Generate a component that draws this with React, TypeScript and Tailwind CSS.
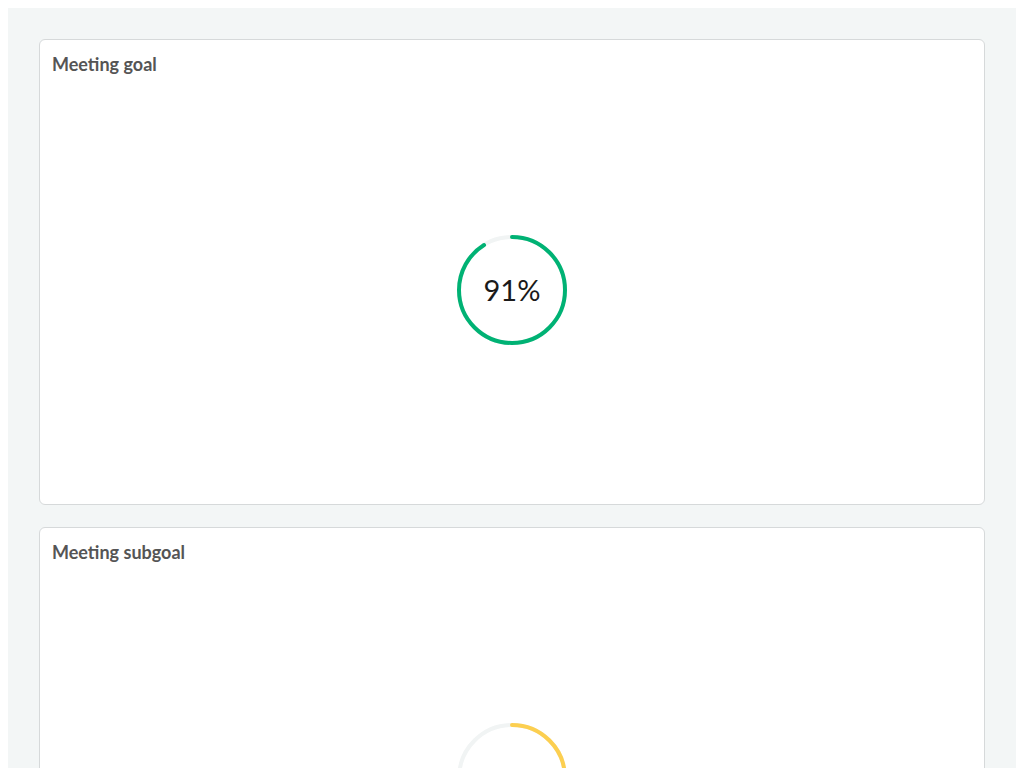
import React from 'react';

type Goal = { title: string; value: number; color: string };

const goals: Goal[] = [
  { title: 'Meeting goal', value: 91, color: '#00b274' },
  { title: 'Meeting subgoal', value: 45, color: '#fccf50' },
];

const Ring: React.FC<{ value: number; color: string }> = ({ value, color }) => {
  const r = 53;
  const c = 2 * Math.PI * r;
  return (
    <div className="relative h-[110px] w-[110px]">
      <svg width="110" height="110" viewBox="0 0 110 110" className="-rotate-90">
        <circle cx="55" cy="55" r={r} fill="none" stroke="#f1f4f4" strokeWidth="4" />
        <circle
          cx="55"
          cy="55"
          r={r}
          fill="none"
          stroke={color}
          strokeWidth="4"
          strokeLinecap="round"
          strokeDasharray={`${(c * value) / 100} ${c}`}
        />
      </svg>
      <div className="absolute inset-0 flex items-center justify-center text-[29px] text-[#1a1a1a]">
        {value}%
      </div>
    </div>
  );
};

const GoalCard: React.FC<{ goal: Goal }> = ({ goal }) => (
  <section className="flex h-[466px] flex-col rounded-md border border-[#d6d9da] bg-white">
    <h2 className="px-3 pt-[12px] text-[18px] font-bold leading-6 text-[#555555]">{goal.title}</h2>
    <div className="flex flex-1 items-center justify-center">
      <Ring value={goal.value} color={goal.color} />
    </div>
  </section>
);

export default function App() {
  return (
    <div className="bg-white p-2" style={{ fontFamily: 'Lato, "Open Sans", sans-serif' }}>
      <main className="flex flex-col gap-[22px] bg-[#f3f6f6] p-[31px]">
        {goals.map((g) => (
          <GoalCard key={g.title} goal={g} />
        ))}
      </main>
    </div>
  );
}
